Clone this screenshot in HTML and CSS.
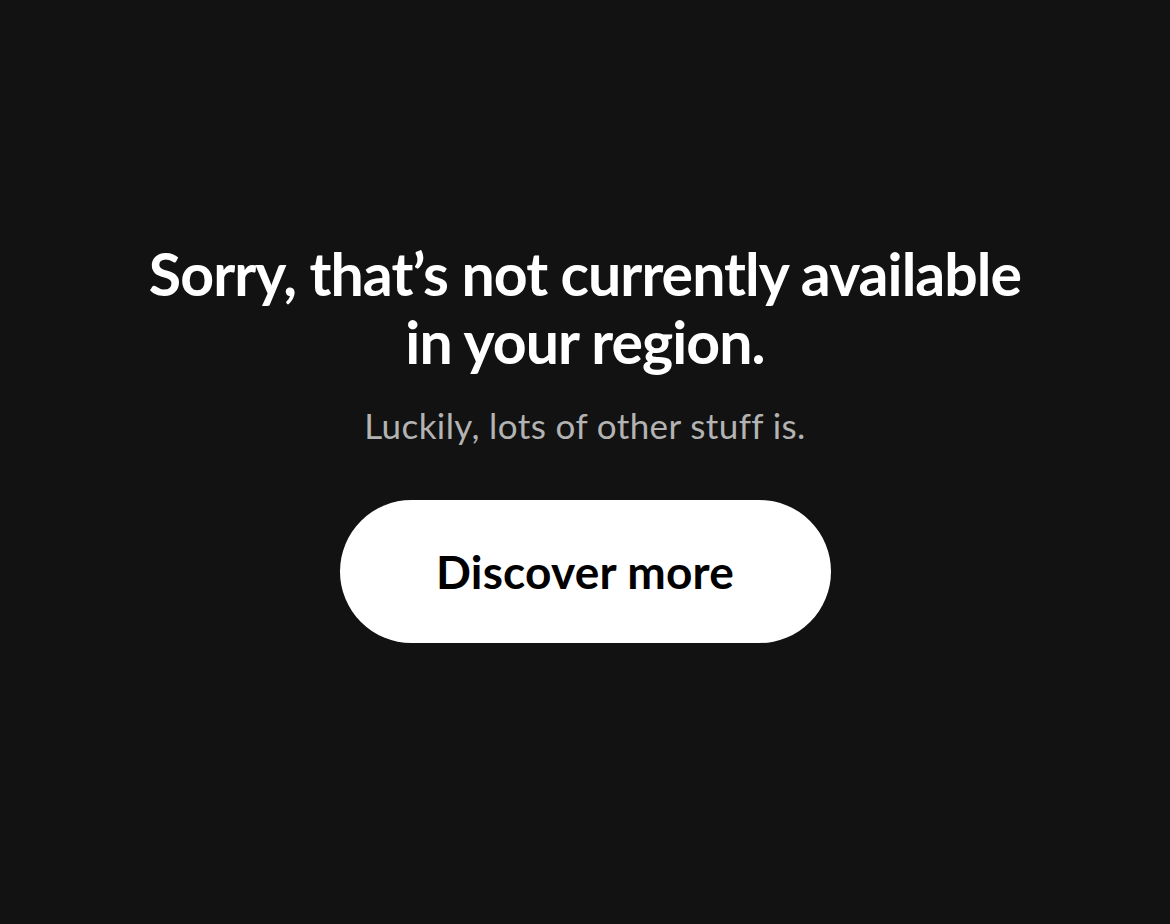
FILE: index.html
```html
<!DOCTYPE html>
<html lang="en">
<head>
  <meta charset="UTF-8" />
  <meta name="viewport" content="width=device-width, initial-scale=1.0" />
  <title>Not available</title>
  <link rel="stylesheet" href="styles.css">
</head>
<body>
  <main class="notice">
    <h1>Sorry, that’s not currently available<br>in your region.</h1>
    <p class="sub">Luckily, lots of other stuff is.</p>
    <a class="discover" href="#">Discover more</a>
  </main>
</body>
</html>
```

FILE: styles.css
```css
html, body {
  height: 100%;
}
body {
  margin: 0;
  background-color: #121212;
  color: #fff;
  font-family: Lato, "Noto Sans", Arial, sans-serif;
}
.notice {
  display: flex;
  flex-direction: column;
  align-items: center;
  text-align: center;
  padding-top: 240px;
}
h1 {
  margin: 0;
  font-size: 59px;
  font-weight: 700;
  line-height: 68px;
  letter-spacing: -0.95px;
}
.sub {
  margin: 28px 0 0;
  font-size: 35px;
  color: #b3b3b3;
  letter-spacing: 0.4px;
}
.discover {
  margin-top: 54px;
  width: 491px;
  height: 143px;
  border-radius: 72px;
  background-color: #fff;
  color: #000;
  text-decoration: none;
  font-size: 46px;
  font-weight: 700;
  letter-spacing: 0.2px;
  display: flex;
  align-items: center;
  justify-content: center;
}
```
